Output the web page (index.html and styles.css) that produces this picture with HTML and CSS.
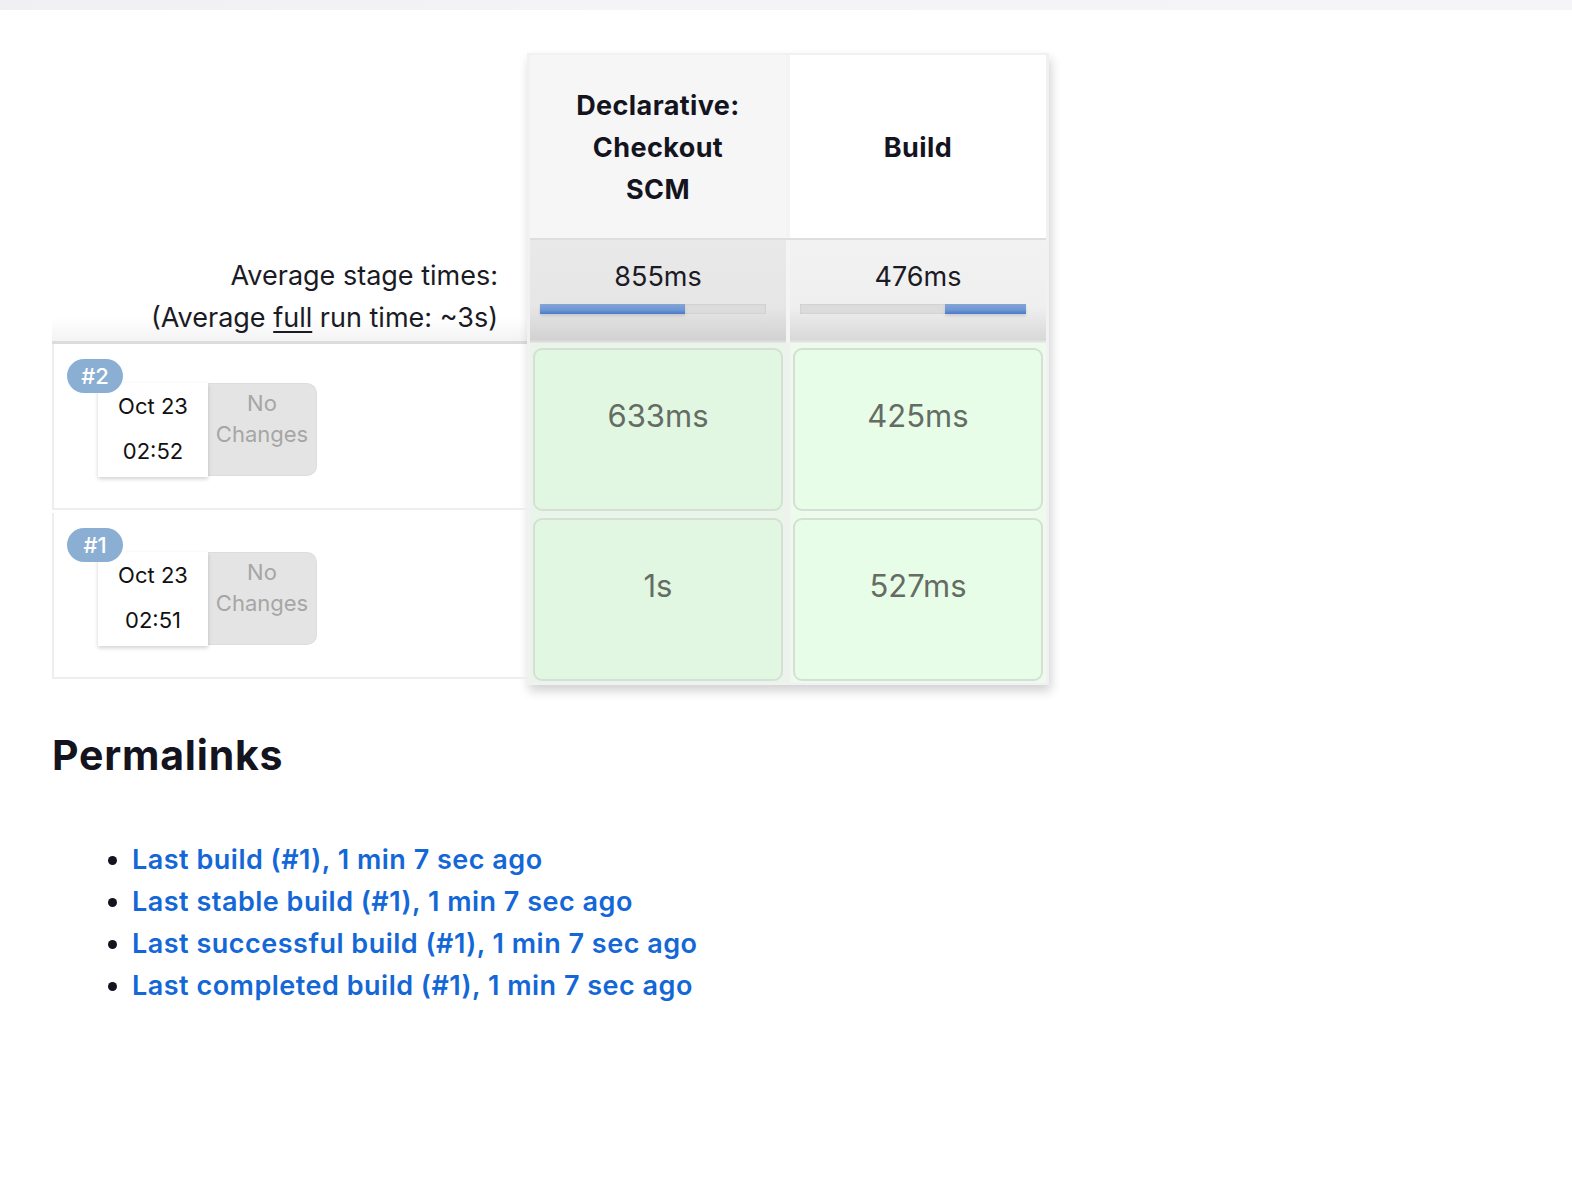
FILE: index.html
```html
<!DOCTYPE html>
<html>
<head>
<meta charset="utf-8">
<link rel="stylesheet" href="styles.css">
</head>
<body>
<div class="topbar"></div>
<main class="content">
  <div class="stageview">
    <div class="left-col">
      <div class="left-spacer"></div>
      <div class="avg-label">
        <div>Average stage times:</div>
        <div>(Average <span class="u">full</span> run time: ~3s)</div>
      </div>
      <div class="build-row">
        <span class="badge">#2</span>
        <div class="build-info">
          <div class="date"><div>Oct 23</div><div>02:52</div></div>
          <div class="changes">No<br>Changes</div>
        </div>
      </div>
      <div class="build-row">
        <span class="badge">#1</span>
        <div class="build-info">
          <div class="date"><div>Oct 23</div><div>02:51</div></div>
          <div class="changes">No<br>Changes</div>
        </div>
      </div>
    </div>
    <div class="stage-box">
      <div class="row head-row">
        <div class="cell head odd">Declarative:<br>Checkout<br>SCM</div>
        <div class="cell head even">Build</div>
      </div>
      <div class="row avg-row">
        <div class="cell avg odd">
          <div class="avg-time">855ms</div>
          <div class="bar"><div class="fill" style="left:0;width:64%"></div></div>
        </div>
        <div class="cell avg even">
          <div class="avg-time">476ms</div>
          <div class="bar"><div class="fill" style="left:64%;width:36%"></div></div>
        </div>
      </div>
      <div class="row run-row">
        <div class="cell run odd"><div class="run-box">633ms</div></div>
        <div class="cell run even"><div class="run-box">425ms</div></div>
      </div>
      <div class="row run-row">
        <div class="cell run odd"><div class="run-box">1s</div></div>
        <div class="cell run even"><div class="run-box">527ms</div></div>
      </div>
    </div>
  </div>

  <h2 class="perma-title">Permalinks</h2>
  <ul class="perma-list">
    <li><a href="#">Last build (#1), 1 min 7 sec ago</a></li>
    <li><a href="#">Last stable build (#1), 1 min 7 sec ago</a></li>
    <li><a href="#">Last successful build (#1), 1 min 7 sec ago</a></li>
    <li><a href="#">Last completed build (#1), 1 min 7 sec ago</a></li>
  </ul>
</main>
</body>
</html>
```
FILE: styles.css
```css
* { box-sizing: border-box; }
html, body { margin: 0; padding: 0; background: #fff; }
body {
  font-family: Inter, "Noto Sans", "Liberation Sans", sans-serif;
  color: #1b1b25;
}
.topbar {
  height: 10px;
  background: linear-gradient(90deg, #f0f0f2 0%, #f4f4f6 40%, #f5f5f7 100%);
}
.content { padding: 43px 0 0 52px; }

.stageview { display: flex; align-items: flex-start; }

.left-col { width: 475px; display: flex; flex-direction: column; }
.left-spacer { height: 192px; }
.avg-label {
  height: 99px;
  text-align: right;
  padding: 10px 29px 0 0;
  font-size: 27px;
  line-height: 42px;
  background: linear-gradient(180deg, #fff 0%, #fff 75%, #f3f3f3 100%);
  border-bottom: 3px solid #dcdcdc;
}
.avg-label .u { text-decoration: underline; text-underline-offset: 4px; text-decoration-thickness: 2px; }

.build-row {
  position: relative;
  height: 166px;
  border-left: 2px solid #eeeeee;
  border-bottom: 2px solid #eeeeee;
  margin-bottom: 3px;
  padding: 39px 0 0 44px;
}
.badge {
  position: absolute;
  left: 13px;
  top: 15px;
  width: 56px;
  height: 34px;
  border-radius: 17px;
  background: #8aafd3;
  color: #fff;
  font-size: 22px;
  font-weight: 500;
  line-height: 34px;
  text-align: center;
  z-index: 2;
}
.build-info { display: flex; }
.date {
  width: 110px;
  height: 94px;
  background: #fff;
  box-shadow: 0 2px 4px rgba(0,0,0,0.18);
  text-align: center;
  font-size: 22px;
  line-height: 45px;
  color: #111;
  padding-top: 1px;
  position: relative;
  z-index: 1;
}
.changes {
  width: 109px;
  height: 93px;
  background: #e4e4e4;
  border: 1px solid #dddddd;
  border-left: none;
  border-radius: 0 10px 10px 0;
  color: #a6a6a6;
  font-size: 22px;
  line-height: 31px;
  text-align: center;
  padding-top: 4px;
}

.stage-box {
  width: 522px;
  border: 3px solid #f1f1f4;
  border-top-width: 2px;
  border-bottom-width: 2px;
  box-shadow: 2px 6px 10px rgba(0,0,0,0.18);
  background: #f1f1f1;
  display: flex;
  flex-direction: column;
}
.row { display: flex; gap: 4px; background: #f4f4f4; }
.cell { width: 256px; }
.head {
  height: 183px;
  display: flex;
  align-items: center;
  justify-content: center;
  text-align: center;
  font-weight: 700;
  font-size: 27px;
  letter-spacing: 0.4px;
  line-height: 42px;
  color: #14141f;
  padding-top: 2px;
}
.head.odd { background: #f6f6f6; }
.head.even { background: #ffffff; }

.avg-row { border-top: 2px solid #dedede; background: #f4f4f4; }
.avg {
  height: 103px;
  padding: 17px 20px 0 10px;
  text-align: center;
}
.avg.odd { background: linear-gradient(180deg, #e9e9e9 0%, #e6e6e6 65%, #d2d2d2 97%, #e8e8e8 100%); }
.avg.even { background: linear-gradient(180deg, #f2f2f2 0%, #efefef 65%, #d8d8d8 97%, #eeeeee 100%); }
.avg-time { font-size: 27px; line-height: 40px; color: #1b1b25; margin-right: -10px; }
.bar {
  position: relative;
  margin-top: 7px;
  height: 10px;
  background: #dcdcdc;
  box-shadow: inset 0 0 2px rgba(0,0,0,0.15);
}
.fill {
  position: absolute;
  top: 0;
  height: 10px;
  background: linear-gradient(180deg, #84a6d6 0%, #6f97d2 60%, #4a78cc 100%);
  box-shadow: 0 2px 3px rgba(0,0,0,0.12);
}

.run-row { background: #f0f0f0; }
.run { height: 170px; padding: 5px 3px 2px 3px; }
.run.odd { background: #e9f5e9; }
.run.even { background: #edfbed; }
.run-box {
  height: 100%;
  border: 2px solid #d6dfd6;
  border-radius: 9px;
  text-align: center;
  font-size: 31px;
  line-height: 40px;
  padding-top: 46px;
  color: #646c64;
}
.odd .run-box { background: #e1f7e1; }
.even .run-box { background: #e8fde8; }

.perma-title {
  margin: 45px 0 0 0;
  font-size: 41px;
  font-weight: 700;
  line-height: 50px;
  color: #14141f;
  letter-spacing: 0.8px;
}
.perma-list {
  margin: 59px 0 0 0;
  padding-left: 80px;
  font-size: 27px;
  line-height: 42px;
}
.perma-list li::marker { color: #14141f; }
.perma-list a {
  color: #1467d6;
  text-decoration: none;
  font-weight: 600;
  letter-spacing: 0.5px;
}
```
